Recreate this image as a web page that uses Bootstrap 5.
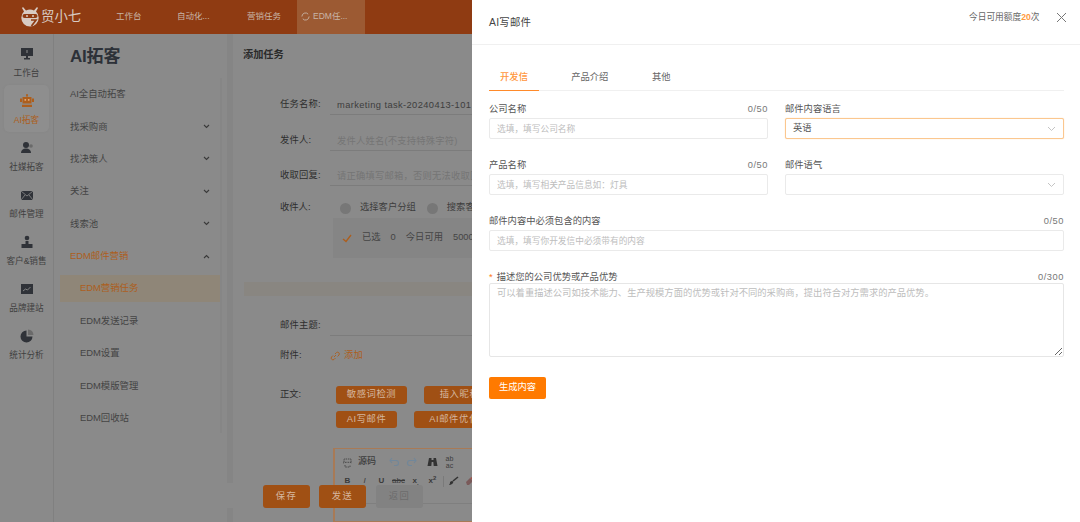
<!DOCTYPE html>
<html lang="zh"><head><meta charset="utf-8">
<link href="https://cdn.jsdelivr.net/npm/bootstrap@5.3.0/dist/css/bootstrap.min.css" rel="stylesheet">
<style>
html,body{height:522px;overflow:hidden;margin:0}
body{font-family:"Liberation Sans","Noto Sans CJK SC",sans-serif;font-size:9.3px;background:#8b8b8b;color:#333;white-space:nowrap}
.shell{width:1080px;height:522px}
.backpage{width:472px;height:522px;flex:none;overflow:hidden;position:relative;background:#8a8a8a;opacity:1}
.topbar{height:33.5px;background:#8f3b12;color:#c8b5a8;font-size:8.5px}
.brandmark{width:116px;padding-left:20px;color:#d8cbc3;font-size:13.4px;gap:1px}
.ti1{width:61px}.ti2{width:70px}.ti3{width:50px}
.tiactive{width:68px;height:33.5px;background:#9c5a33;padding-left:4px;gap:3px}
.lower{height:488.5px}
.rail{width:54px;flex:none;border-right:1px solid #808080;padding-top:4.5px}
.railitem{width:45px;height:47px;margin-left:4px;color:#3f3f3f;font-size:8.6px;line-height:11px;padding-top:9px}
.railitem svg{width:14px;height:14px;margin-bottom:6.5px;display:block;flex:none}
.railitem.on{background:#8e8e8e;border-radius:5px;color:#ad5e1c;box-shadow:0 0 2px #858585}
.menu{width:168px;flex:none;padding-top:12px;position:relative}
.menuhead{font-size:17px;font-weight:700;color:#2d3138;padding-left:16px;line-height:22px;margin-bottom:10.5px;letter-spacing:-.2px}
.menurow{height:32.4px;padding:0 12px 0 16px;color:#444;font-size:9.4px}
.menurow.sub{padding-left:26px}
.menurow.open{color:#ad5e1c}
.menurow.cur{color:#ad5e1c;background:#8f8678;border-right:2px solid #ad5e1c;margin:3px 0 3px 6px;height:26.4px;padding-left:20px;padding-right:0}
.chev{width:7px;height:5px}
.menubar{position:absolute;right:0;top:44px;width:2px;height:355px;background:#868686}
.gutter{width:5px;flex:none}
.gstrip{width:6px;flex:none;background:#858585;height:449.5px}
.gstrip2{width:6px;background:#858585;height:14px;position:absolute;left:227px;top:508px}
.pane{width:239px;flex:none;padding-top:14px}
.panehead{font-size:10.2px;font-weight:700;color:#2b2b2b;line-height:14px;padding-left:10px;margin-bottom:26px}
.frow{height:35.5px;padding-left:47px;color:#2e2e2e;font-size:9.3px;letter-spacing:.2px}
.attrow{height:24px}
.flabel{width:50px;flex:none}
.fbox{flex:1;height:20px;line-height:20px;border-bottom:1px solid #7c7c7c;color:#3d3d3d;padding-left:7px;overflow:hidden;letter-spacing:.4px}
.fbox.hint{color:#757575;letter-spacing:.2px}
.radio{width:11px;height:11px;border-radius:50%;background:#777;flex:none}
.rcvrow{height:28px;padding-left:47px;font-size:9.3px;color:#2e2e2e}
.r1{margin-left:10px}.r2{margin-left:11px}
.rcvtext{color:#3d3d3d;margin-left:9px}
.selbox{margin:-3.75px 0 0 100px;height:40px;background:#858585;padding-left:9px;gap:10px;color:#444;font-size:9.3px;overflow:hidden}
.band{height:14px;background:#898681;margin:24px 0 0 11px}
.subjrow{margin-top:12.25px}
.bodyrow{margin-top:18px;padding-left:47px;color:#2e2e2e}
.bodylabel{width:56px;flex:none;line-height:17.5px;font-size:9.3px}
.btnline{gap:17px;margin-bottom:7px}
.orangebtn,.orangebtn:hover{background:#a05014;color:#d5b69f;border:0;border-radius:3px;height:17.5px;line-height:17.5px;font-size:9.3px;padding:0;letter-spacing:.6px;flex:none}
.w71{width:71px}.w61{width:61px}.w80{width:80px}
.txt-org{color:#ad5e1c}
.editor{margin:13px 0 0 100px;border:1px solid #a87a56;border-width:1px 0 1px 2px;height:74px;padding:3px 0 0 4px;color:#3d3d3d;font-size:9px;overflow:hidden}
.toolrow{height:20px;gap:0}
.srcword{margin:0 10px 0 2px;font-weight:500}
.tcell{width:17px;text-align:center;flex:none;line-height:1}
.tcell small{font-size:7px}
.toolrow2{height:18px;font-weight:700;font-size:8px;color:#3a3a3a}
.toolsep{width:1px;height:11px;background:#7a7a7a;flex:none;margin:0 1px 0 2px}
.editline{height:1px;background:#7f7f7f;margin:13px 0 0 -4px}
.foot{position:absolute;left:263px;top:485px;gap:9px}
.footbtn,.footbtn:hover{width:47px;height:23px;border:0;border-radius:3px;padding:0;background:#a05014;color:#d5b69f;font-size:9.3px;letter-spacing:1.5px}
.footbtn.off,.footbtn.off:hover{background:#828282;color:#6c6c6c;margin-left:1px}
.drawer{width:608px;flex:none;height:522px;background:#fff;color:#555}
.drawhead{height:45px;border-bottom:1px solid #f0f0f0;padding:0 13.5px 0 17px}
.drawtitle{font-size:10.4px;color:#444;letter-spacing:.25px;position:relative;top:.5px}
.quota{font-size:8.7px;color:#666;margin-right:16px;position:relative;top:-4px}
.quota b{color:#ff9a3c;font-weight:700}
.closex{width:11px;height:11px;border:0;background:none;padding:0;display:block;position:relative;top:-4px}
.closex svg{display:block}
.drawbody{padding:0 16px 0 17px}
.tabline{margin-top:21px;height:25px;border-bottom:1px solid #f0f0f0;margin-bottom:9px}
.tabitem{color:#666;font-size:9.3px;height:25px;line-height:22px;text-align:center}
.tabitem.act{width:50px;color:#ff963c;border-bottom:1.5px solid #ff8a2a;font-weight:500}
.t2{margin-left:32px;width:37.5px}.t3{margin-left:43.5px;width:18.6px}
.fieldrow{--bs-gutter-x:17px;--bs-gutter-y:0}
.fieldwrap{margin-bottom:17px}
.fieldtop{height:18px;line-height:18px;font-size:9.3px;color:#555}
.fcount{color:#777;letter-spacing:.55px}
.req{color:#ff7a1a;margin-right:4px}
.entry,.entry:focus{height:21px;min-height:0;font-size:8.7px;padding:0 7px;border:1px solid #eaeaea;border-radius:2px;color:#555;box-shadow:none}
.entry::placeholder{color:#bdbdbd}
.selentry{height:21px;font-size:9.3px;padding:0 7px;border:1px solid #eaeaea;border-radius:2px;color:#555;background:#fff}
.selentry.on{border-color:#fbc78f;box-shadow:0 0 1px #fbc78f}
.selentry svg{width:9px;height:6px}
.areabox,.areabox:focus{height:74px;font-size:9.3px;padding:3px 7px;border:1px solid #e6e6e6;border-radius:2px;box-shadow:none;line-height:13px}
.areabox::placeholder{color:#bdbdbd}
.toptight{height:15px}
.genbtn,.genbtn:hover{width:57px;height:21.5px;background:#ff7a00;border:0;border-radius:2px;color:#fff;font-size:9.3px;padding:0;margin-top:20px;display:block}
</style></head>
<body>
<div class="shell d-flex">
 <div class="backpage">
  <div class="topbar d-flex align-items-center">
   <div class="brandmark d-flex align-items-center">
    <svg width="20" height="20" viewBox="0 0 20 20" class="flex-shrink-0"><path fill="#d8cbc3" d="M3 0l3 3.500a8.500 8.500 0 0 1 8 0L17 0l1 1-2 3.500A8.700 8.700 0 1 1 4 4.500L2 1z"/><rect x="2.500" y="7" width="15" height="4" rx="2" fill="#8f3b12"/><circle cx="7" cy="9" r="1" fill="#d8cbc3"/><circle cx="13" cy="9" r="1" fill="#d8cbc3"/><path d="M11 13h5l-4.500 6" stroke="#8f3b12" stroke-width="1.700" fill="none"/></svg>
    <span>贸小七</span>
   </div>
   <div class="ti1">工作台</div><div class="ti2">自动化...</div><div class="ti3">营销任务</div>
   <div class="tiactive d-flex align-items-center"><svg width="9" height="9" viewBox="0 0 10 10"><path d="M1 5a4 4 0 0 1 7-2.600M9 5a4 4 0 0 1-7 2.600" fill="none" stroke="#c8b5a8"/></svg><span>EDM任...</span></div>
  </div>
  <div class="lower d-flex">
   <div class="rail">
    <div class="railitem d-flex flex-column align-items-center"><svg viewBox="0 0 14 14"><path fill="#2f3238" d="M1 1h12v8H8v2h2v1.500H4V11h2V9H1z"/><path fill="#8b8b8b" d="M6.500 3h1v3h-1z"/></svg>工作台</div>
    <div class="railitem on d-flex flex-column align-items-center"><svg viewBox="0 0 14 14"><circle cx="7" cy="1" r="1" fill="#ad5e1c"/><path fill="#ad5e1c" d="M6.500 1h1v2h-1zM2.500 3h9v6.500h-9zM0 4.500h2v3.500H0zM12 4.500h2v3.500h-2zM2 10.800h10V13H2z"/><path fill="#e0a878" d="M4.500 5h1.600v1.800H4.500zM7.900 5h1.600v1.800H7.900z"/></svg>AI拓客</div>
    <div class="railitem d-flex flex-column align-items-center"><svg viewBox="0 0 14 14"><circle cx="6" cy="4" r="3" fill="#2f3238"/><path fill="#2f3238" d="M1 12c0-3 2-4.500 5-4.500s5 1.500 5 4.500z"/><circle cx="11" cy="5" r="1.800" fill="#6a6a6a"/></svg>社媒拓客</div>
    <div class="railitem d-flex flex-column align-items-center"><svg viewBox="0 0 14 14"><path fill="#2f3238" d="M1 3h12v9H1z"/><path d="M1 3l6 5 6-5M1 12l4-5M13 12L9 7" stroke="#8b8b8b" fill="none" stroke-width=".8"/></svg>邮件管理</div>
    <div class="railitem d-flex flex-column align-items-center"><svg viewBox="0 0 14 14"><circle cx="7" cy="3" r="2.300" fill="#2f3238"/><path fill="#2f3238" d="M5.500 6h3v3h4v4H1.500V9h4z"/></svg>客户&amp;销售</div>
    <div class="railitem d-flex flex-column align-items-center"><svg viewBox="0 0 14 14"><rect x="1" y="2" width="12" height="10" fill="#2f3238"/><path d="M3 9l2.500-2 2 1 3-3" stroke="#8b8b8b" fill="none" stroke-width=".9"/></svg>品牌建站</div>
    <div class="railitem d-flex flex-column align-items-center"><svg viewBox="0 0 14 14"><path fill="#2f3238" d="M6.500 1.500a6 6 0 1 0 6 6h-6z"/><path fill="#6a6a6a" d="M8 0.500a6 6 0 0 1 5.500 5.500H8z"/></svg>统计分析</div>
   </div>
   <div class="menu">
    <div class="menuhead">AI拓客</div>
    <div class="menurow d-flex align-items-center">AI全自动拓客</div>
    <div class="menurow d-flex align-items-center justify-content-between">找采购商<svg class="chev" viewBox="0 0 7 5"><path d="M1 1l2.500 2.500L6 1" fill="none" stroke="#3a3a3a" stroke-width="1.100"/></svg></div>
    <div class="menurow d-flex align-items-center justify-content-between">找决策人<svg class="chev" viewBox="0 0 7 5"><path d="M1 1l2.500 2.500L6 1" fill="none" stroke="#3a3a3a" stroke-width="1.100"/></svg></div>
    <div class="menurow d-flex align-items-center justify-content-between">关注<svg class="chev" viewBox="0 0 7 5"><path d="M1 1l2.500 2.500L6 1" fill="none" stroke="#3a3a3a" stroke-width="1.100"/></svg></div>
    <div class="menurow d-flex align-items-center justify-content-between">线索池<svg class="chev" viewBox="0 0 7 5"><path d="M1 1l2.500 2.500L6 1" fill="none" stroke="#3a3a3a" stroke-width="1.100"/></svg></div>
    <div class="menurow open d-flex align-items-center justify-content-between">EDM邮件营销<svg class="chev" viewBox="0 0 7 5"><path d="M1 4l2.500-2.500L6 4" fill="none" stroke="#3a3a3a" stroke-width="1.100"/></svg></div>
    <div class="menurow cur d-flex align-items-center">EDM营销任务</div>
    <div class="menurow sub d-flex align-items-center">EDM发送记录</div>
    <div class="menurow sub d-flex align-items-center">EDM设置</div>
    <div class="menurow sub d-flex align-items-center">EDM模版管理</div>
    <div class="menurow sub d-flex align-items-center">EDM回收站</div>
    <div class="menubar"></div>
   </div>
   <div class="gutter"></div>
   <div class="gstrip"></div>
   <div class="pane">
    <div class="panehead">添加任务</div>
    <div class="frow d-flex align-items-center"><div class="flabel">任务名称:</div><div class="fbox">marketing task-20240413-101</div></div>
    <div class="frow d-flex align-items-center"><div class="flabel">发件人:</div><div class="fbox hint">发件人姓名(不支持特殊字符)</div></div>
    <div class="frow d-flex align-items-center"><div class="flabel">收取回复:</div><div class="fbox hint">请正确填写邮箱，否则无法收取回复</div></div>
    <div class="rcvrow d-flex align-items-center"><div class="flabel">收件人:</div><div class="radio r1"></div><div class="rcvtext">选择客户分组</div><div class="radio r2"></div><div class="rcvtext">搜索客户</div></div>
    <div class="selbox d-flex align-items-center"><svg width="10" height="9" viewBox="0 0 10 9" class="flex-shrink-0"><path d="M1 5l3 2.500L9 1" fill="none" stroke="#ad5e1c" stroke-width="1.300"/></svg><span>已选</span><span>0</span><span>今日可用</span><span>5000</span></div>
    <div class="band"></div>
    <div class="frow subjrow d-flex align-items-center"><div class="flabel">邮件主题:</div><div class="fbox"></div></div>
    <div class="frow attrow d-flex align-items-center"><div class="flabel">附件:</div><svg width="10" height="10" viewBox="0 0 10 10" class="me-1 flex-shrink-0"><path d="M4 6l2-2M3 4.500L1.500 6a1.800 1.800 0 0 0 2.500 2.500L5.500 7M5 3l1.500-1.500A1.800 1.800 0 0 1 9 4L7.500 5.500" fill="none" stroke="#ad5e1c" stroke-width=".9"/></svg><span class="txt-org">添加</span></div>
    <div class="bodyrow d-flex">
     <div class="bodylabel">正文:</div>
     <div>
      <div class="btnline d-flex"><button class="btn orangebtn w71" type="button">敏感词检测</button><button class="btn orangebtn w71" type="button">插入昵称</button></div>
      <div class="btnline d-flex"><button class="btn orangebtn w61" type="button">AI写邮件</button><button class="btn orangebtn w80" type="button">AI邮件优化</button></div>
     </div>
    </div>
    <div class="editor">
     <div class="toolrow d-flex align-items-center">
      <span class="tcell"><svg width="11" height="11" viewBox="0 0 11 11"><path d="M2 5V2h7v3M1 6c2-1 7-1 9 0M3 8v2h5V8" fill="none" stroke="#4a4a4a" stroke-dasharray="1.500 .8"/></svg></span><span class="srcword">源码</span>
      <span class="tcell"><svg width="11" height="10" viewBox="0 0 11 10"><path d="M3 1L1 3.500 3 6M1 3.500h6a2.500 2.500 0 0 1 0 5H5" fill="none" stroke="#71879a" stroke-width="1.100"/></svg></span>
      <span class="tcell"><svg width="11" height="10" viewBox="0 0 11 10"><path d="M8 1l2 2.500L8 6M10 3.500H4a2.500 2.500 0 0 0 0 5h2" fill="none" stroke="#71879a" stroke-width="1.100"/></svg></span>
      <span class="tcell ms-1"><svg width="11" height="10" viewBox="0 0 11 10"><path fill="#333" d="M2 1h2.500v2h2V1H9l1.500 8h-3.800L6.300 5H4.700L4.300 9H.5z"/></svg></span>
      <span class="tcell"><small class="d-block lh-1">ab<br>ac</small></span>
     </div>
     <div class="toolrow2 d-flex align-items-center">
      <span class="tcell">B</span><span class="tcell fst-italic fw-normal">I</span><span class="tcell">U</span><span class="tcell fw-normal text-decoration-line-through">abc</span><span class="tcell">x<sub>.</sub></span><span class="tcell">x<sup>2</sup></span><span class="toolsep"></span>
      <span class="tcell"><svg width="11" height="10" viewBox="0 0 11 10"><path d="M10 1L5 5" stroke="#333" stroke-width="1.600"/><path d="M2 6c2-2 4-1 3 1-1 1.500-3 2-4 2 1-1 1-2 1-3z" fill="#333"/></svg></span>
      <span class="tcell"><svg width="11" height="10" viewBox="0 0 11 10"><path d="M1 6l4-4 3 3-4 4H2z" fill="#7a5a5a"/><path d="M5 2l2-1 3 3-2 1z" fill="#a0524a"/></svg></span>
     </div>
     <div class="editline"></div>
    </div>
   </div>
  </div>
  <div class="gstrip2"></div>
  <div class="foot d-flex"><button class="btn footbtn" type="button">保存</button><button class="btn footbtn" type="button">发送</button><button class="btn footbtn off" type="button">返回</button></div>
 </div>
 <div class="drawer">
  <div class="drawhead d-flex align-items-center justify-content-between">
   <div class="drawtitle">AI写邮件</div>
   <div class="d-flex align-items-center"><div class="quota">今日可用额度<b>20</b>次</div><button class="closex" type="button" aria-label="关闭"><svg width="11" height="11" viewBox="0 0 11 11"><path d="M1 1l9 9M10 1l-9 9" stroke="#777" stroke-width="1"/></svg></button></div>
  </div>
  <div class="drawbody">
   <div class="tabline d-flex"><div class="tabitem act">开发信</div><div class="tabitem t2">产品介绍</div><div class="tabitem t3">其他</div></div>
   <div class="row fieldrow">
    <div class="col-6 fieldwrap"><div class="fieldtop d-flex justify-content-between"><span>公司名称</span><span class="fcount">0/50</span></div><input class="form-control entry" placeholder="选填，填写公司名称"></div>
    <div class="col-6 fieldwrap"><div class="fieldtop"><span>邮件内容语言</span></div><div class="selentry on d-flex align-items-center justify-content-between"><span>英语</span><svg viewBox="0 0 9 6"><path d="M1 1l3.500 3.500L8 1" fill="none" stroke="#c4c4c4"/></svg></div></div>
    <div class="col-6 fieldwrap"><div class="fieldtop d-flex justify-content-between"><span>产品名称</span><span class="fcount">0/50</span></div><input class="form-control entry" placeholder="选填，填写相关产品信息如：灯具"></div>
    <div class="col-6 fieldwrap"><div class="fieldtop"><span>邮件语气</span></div><div class="selentry d-flex align-items-center justify-content-between"><span></span><svg viewBox="0 0 9 6"><path d="M1 1l3.500 3.500L8 1" fill="none" stroke="#c4c4c4"/></svg></div></div>
    <div class="col-12 fieldwrap"><div class="fieldtop d-flex justify-content-between"><span>邮件内容中必须包含的内容</span><span class="fcount">0/50</span></div><input class="form-control entry" placeholder="选填，填写你开发信中必须带有的内容"></div>
    <div class="col-12"><div class="fieldtop toptight d-flex justify-content-between"><span><span class="req">*</span>描述您的公司优势或产品优势</span><span class="fcount">0/300</span></div><textarea class="form-control areabox" placeholder="可以着重描述公司如技术能力、生产规模方面的优势或针对不同的采购商，提出符合对方需求的产品优势。"></textarea></div>
   </div>
   <button class="btn genbtn" type="button">生成内容</button>
  </div>
 </div>
</div>
</body></html>
